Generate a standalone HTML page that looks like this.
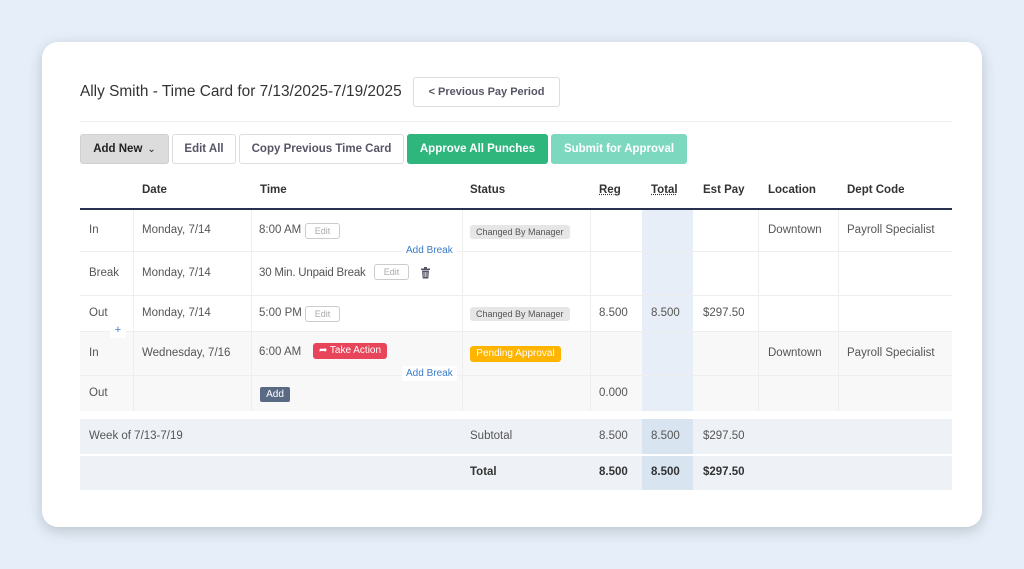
<!DOCTYPE html>
<html><head><meta charset="utf-8"><style>
*{box-sizing:border-box;margin:0;padding:0}
body{width:1024px;height:569px;background:#e5eef9;font-family:"Liberation Sans",Arial,sans-serif;position:relative;overflow:hidden;color:#444}
.card{position:absolute;left:42px;top:42px;width:940px;height:485px;background:#fff;border-radius:16px;box-shadow:0 4px 14px rgba(0,0,0,.18)}
.a{position:absolute}
.t{position:absolute;font-size:11.5px;color:#555;white-space:nowrap}
.btn{position:absolute;height:30px;border:1px solid #ddd;border-radius:3px;font-size:11.5px;font-weight:bold;display:flex;align-items:center;justify-content:center;color:#556;background:#fff;white-space:nowrap}
.h{position:absolute;font-size:11.5px;font-weight:bold;color:#333;top:184px}
.vl{position:absolute;width:1px;background:#eee}
.hl{position:absolute;height:1px;background:#eee;left:80px;width:872px}
.edit{position:absolute;height:16px;border:1px solid #ccc;border-radius:3px;font-size:9px;color:#aaa;display:flex;align-items:center;justify-content:center;width:35px}
.badge{position:absolute;height:14px;border-radius:3px;background:#e6e6e6;font-size:9px;color:#555;padding:0 6px;line-height:14px;white-space:nowrap}
.ab{position:absolute;font-size:10px;color:#3a7bc8;background:#fff;padding:2px 4px}
</style></head><body>
<div class="card"></div>
<div class="t" style="left:80px;top:83px;font-size:15.4px;color:#333">Ally Smith - Time Card for 7/13/2025-7/19/2025</div>
<div class="btn" style="left:413px;top:77px;width:147px;font-size:11px">&lt; Previous Pay Period</div>
<div class="a" style="left:80px;top:121px;width:872px;height:1px;background:#f0f0f0"></div>
<div class="btn" style="left:80px;top:134px;width:89px;background:#dcdcdc;border-color:#d0d0d0;color:#222">Add New <span style="font-weight:normal;margin-left:5px;font-size:10px">&#8964;</span></div>
<div class="btn" style="left:172px;top:134px;width:64px">Edit All</div>
<div class="btn" style="left:239px;top:134px;width:165px">Copy Previous Time Card</div>
<div class="btn" style="left:407px;top:134px;width:141px;background:#2eb67d;border-color:#2eb67d;color:#fff">Approve All Punches</div>
<div class="btn" style="left:551px;top:134px;width:136px;background:#7dd8c0;border-color:#7dd8c0;color:#fff">Submit for Approval</div>

<div class="a" style="left:80px;top:332px;width:872px;height:79px;background:#f8f8f8"></div>
<div class="a" style="left:642px;top:210px;width:51px;height:201px;background:#e7eef8"></div>
<div class="a" style="left:80px;top:419px;width:872px;height:71px;background:#eef2f7"></div>
<div class="a" style="left:642px;top:419px;width:51px;height:71px;background:#d9e4f1"></div>
<div class="a" style="left:80px;top:454px;width:872px;height:2px;background:#fff"></div>

<div class="h" style="left:142px">Date</div>
<div class="h" style="left:260px">Time</div>
<div class="h" style="left:470px">Status</div>
<div class="h" style="left:599px;text-decoration:underline dotted">Reg</div>
<div class="h" style="left:651px;text-decoration:underline dotted">Total</div>
<div class="h" style="left:703px">Est Pay</div>
<div class="h" style="left:768px">Location</div>
<div class="h" style="left:847px">Dept Code</div>
<div class="a" style="left:80px;top:208px;width:872px;height:2px;background:#2a3150"></div>

<div class="vl" style="left:133px;top:210px;height:201px"></div>
<div class="vl" style="left:251px;top:210px;height:201px"></div>
<div class="vl" style="left:462px;top:210px;height:201px"></div>
<div class="vl" style="left:590px;top:210px;height:201px"></div>
<div class="vl" style="left:758px;top:210px;height:201px"></div>
<div class="vl" style="left:838px;top:210px;height:201px"></div>
<div class="hl" style="top:251px"></div>
<div class="hl" style="top:295px"></div>
<div class="hl" style="top:331px"></div>
<div class="hl" style="top:375px"></div>

<div class="t" style="left:89px;top:224px">In</div>
<div class="t" style="left:142px;top:224px">Monday, 7/14</div>
<div class="t" style="left:259px;top:224px">8:00 AM</div>
<div class="edit" style="left:305px;top:223px">Edit</div>
<div class="badge" style="left:470px;top:225px">Changed By Manager</div>
<div class="t" style="left:768px;top:224px">Downtown</div>
<div class="t" style="left:847px;top:224px">Payroll Specialist</div>
<div class="ab" style="left:402px;top:243px">Add Break</div>

<div class="t" style="left:89px;top:267px">Break</div>
<div class="t" style="left:142px;top:267px">Monday, 7/14</div>
<div class="t" style="left:259px;top:267px;letter-spacing:-0.2px">30 Min. Unpaid Break</div>
<div class="edit" style="left:374px;top:264px">Edit</div>
<svg class="a" style="left:420px;top:267px" width="11" height="12" viewBox="0 0 11 12"><rect x="1" y="1.5" width="9" height="1.5" fill="#556"/><rect x="4" y="0" width="3" height="1.5" fill="#556"/><path d="M2 3.5h7l-.7 8H2.7z" fill="#556"/><path d="M4 5v5M5.5 5v5M7 5v5" stroke="#fff" stroke-width=".6"/></svg>

<div class="t" style="left:89px;top:307px">Out</div>
<div class="t" style="left:142px;top:307px">Monday, 7/14</div>
<div class="t" style="left:259px;top:307px">5:00 PM</div>
<div class="edit" style="left:305px;top:306px">Edit</div>
<div class="badge" style="left:470px;top:307px">Changed By Manager</div>
<div class="t" style="left:599px;top:307px">8.500</div>
<div class="t" style="left:651px;top:307px">8.500</div>
<div class="t" style="left:703px;top:307px">$297.50</div>
<div class="a" style="left:110px;top:322px;width:16px;height:16px;background:#fff;color:#3a7bc8;font-size:11px;text-align:center;line-height:16px">+</div>

<div class="t" style="left:89px;top:347px">In</div>
<div class="t" style="left:142px;top:347px">Wednesday, 7/16</div>
<div class="t" style="left:259px;top:346px">6:00 AM</div>
<div class="a" style="left:313px;top:343px;width:74px;height:16px;background:#e8455a;border-radius:3px;color:#fff;font-size:10px;line-height:16px;text-align:center;white-space:nowrap">&#10150; Take Action</div>
<div class="a" style="left:470px;top:346px;width:91px;height:16px;background:#ffb400;border-radius:3px;color:#fff;font-size:10px;line-height:16px;text-align:center;white-space:nowrap">Pending Approval</div>
<div class="t" style="left:768px;top:347px">Downtown</div>
<div class="t" style="left:847px;top:347px">Payroll Specialist</div>
<div class="ab" style="left:402px;top:366px">Add Break</div>

<div class="t" style="left:89px;top:387px">Out</div>
<div class="a" style="left:260px;top:387px;width:30px;height:15px;background:#5a6a85;border-radius:2px;color:#fff;font-size:10px;line-height:15px;text-align:center">Add</div>
<div class="t" style="left:599px;top:387px">0.000</div>

<div class="t" style="left:89px;top:430px">Week of 7/13-7/19</div>
<div class="t" style="left:470px;top:430px">Subtotal</div>
<div class="t" style="left:599px;top:430px">8.500</div>
<div class="t" style="left:651px;top:430px">8.500</div>
<div class="t" style="left:703px;top:430px">$297.50</div>
<div class="t" style="left:470px;top:466px;font-weight:bold;color:#333">Total</div>
<div class="t" style="left:599px;top:466px;font-weight:bold;color:#333">8.500</div>
<div class="t" style="left:651px;top:466px;font-weight:bold;color:#333">8.500</div>
<div class="t" style="left:703px;top:466px;font-weight:bold;color:#333">$297.50</div>
</body></html>
